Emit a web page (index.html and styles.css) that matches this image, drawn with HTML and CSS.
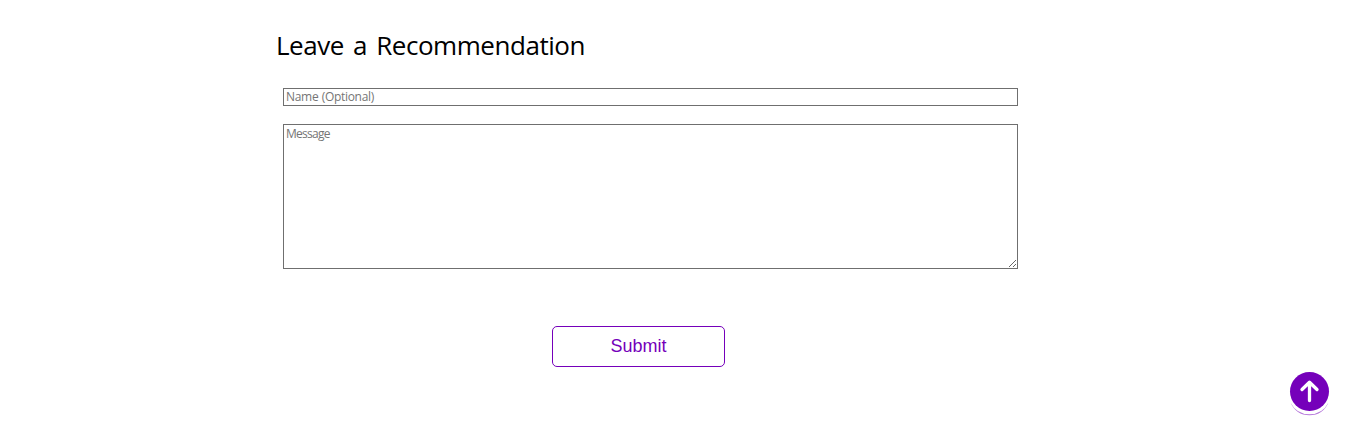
FILE: index.html
```html
<!DOCTYPE html>
<html lang="en">
<head>
<meta charset="utf-8">
<title>Leave a Recommendation</title>
<link rel="stylesheet" href="styles.css">
</head>
<body>
<section class="recommend">
  <h2 class="title">Leave a Recommendation</h2>
  <form class="form">
    <input class="field name" type="text" placeholder="Name (Optional)">
    <textarea class="field message" placeholder="Message"></textarea>
  </form>
  <button class="submit" type="button">Submit</button>
</section>
<a class="to-top" href="#" aria-label="Back to top">
  <svg width="42" height="46" viewBox="0 0 42 46">
    <path d="M1.5 31.5Q7.5 43.3 20.5 43.3T39.5 31.5Q34 44.2 20.5 44.2T1.5 31.5z" fill="#7500ba" opacity=".55"/>
    <circle cx="20.5" cy="20.5" r="19.5" fill="#7500ba"/>
    <path d="M20.5 29.5V11.5M13 18.5l7.5-7.3l7.5 7.3" fill="none" stroke="#fff" stroke-width="3.3" stroke-linecap="round" stroke-linejoin="round"/>
  </svg>
</a>
</body>
</html>
```
FILE: styles.css
```css
body {
  margin: 0;
  background: #fff;
  color: #000;
  font-family: "Trebuchet MS", "Open Sans", sans-serif;
}
.recommend {
  display: flow-root;
  width: 742px;
  margin-left: 276px;
}
.title {
  height: 36px;
  margin: 27px 0 25px;
  font-size: 26px;
  line-height: 36px;
  font-weight: 400;
  letter-spacing: -0.45px;
  word-spacing: 2.8px;
  white-space: nowrap;
}
.form {
  display: flex;
  flex-direction: column;
  gap: 18px;
  margin-left: 7px;
}
.field {
  box-sizing: border-box;
  width: 735px;
  margin: 0;
  border: 1px solid #6f6f6f;
  border-radius: 0;
  background: #fff;
  font-family: inherit;
  font-size: 12px;
  outline: none;
}
.field::placeholder {
  color: #757575;
}
.name {
  height: 18px;
  padding: 0 2px 1px;
}
.name::placeholder {
  letter-spacing: -0.3px;
  word-spacing: 0.5px;
}
.message {
  height: 145px;
  padding: 2px;
  line-height: 14px;
  resize: vertical;
}
.message::placeholder {
  letter-spacing: -0.75px;
}
.submit {
  display: block;
  width: 173px;
  height: 41px;
  margin: 57px 0 0 276px;
  padding: 0;
  border: 1px solid #7500ba;
  border-radius: 5px;
  background: #fff;
  color: #7500ba;
  font-family: "Liberation Sans", Arial, sans-serif;
  font-size: 18px;
}
.to-top {
  position: fixed;
  left: 1289px;
  top: 371px;
  width: 42px;
  height: 46px;
}
.to-top svg {
  display: block;
}
```
